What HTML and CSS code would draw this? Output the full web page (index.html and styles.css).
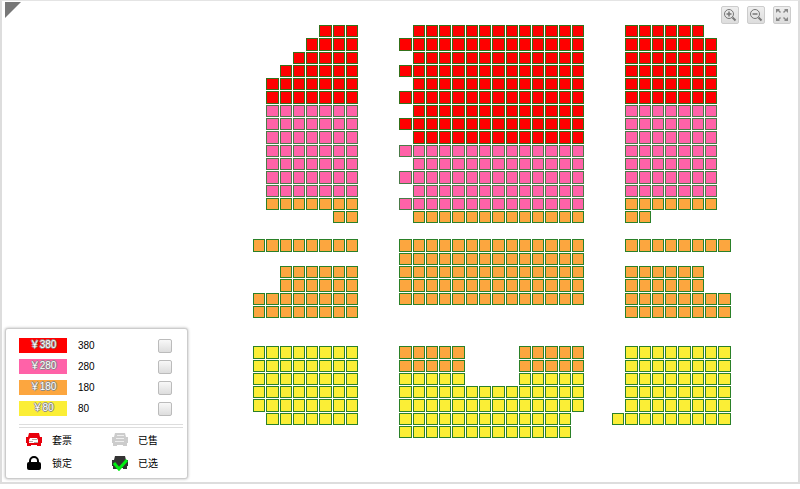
FILE: index.html
```html
<!DOCTYPE html>
<html lang="zh-CN">
<head>
    <meta charset="UTF-8">
    <meta name="viewport" content="width=device-width, initial-scale=1.0">
    <title>选座</title>
    <link rel="stylesheet" href="styles.css">
</head>
<body>
    <main class="panel">
        <div class="side">
            <svg class="corner" width="16" height="16" viewBox="0 0 16 16" aria-hidden="true">
                <path d="M0 0h16L0 16z" fill="#777"/>
            </svg>

            <!-- Price filter and seat legend -->
            <section class="legend">
                <ul class="prices">
                    <li><span class="tag red">￥380</span><label for="p380">380</label><input type="checkbox" id="p380"></li>
                    <li><span class="tag pink">￥280</span><label for="p280">280</label><input type="checkbox" id="p280"></li>
                    <li><span class="tag orange">￥180</span><label for="p180">180</label><input type="checkbox" id="p180"></li>
                    <li><span class="tag yellow">￥80</span><label for="p80">80</label><input type="checkbox" id="p80"></li>
                </ul>
                <ul class="states">
                    <li>
                        <svg width="18" height="16" viewBox="0 0 18 16" aria-hidden="true">
                            <path d="M4 1h10l1 4h2v6h-1v3h-4v-1H6v1H2v-3H1V5h2z" fill="#e8000c"/>
                            <path d="M5 6h7l1 2v3H4V8z" fill="#fff"/>
                            <path d="M4 9.5h4M7 7.5h5M9 10.5h4" stroke="#b9a9a0"/>
                        </svg>
                        <span>套票</span>
                    </li>
                    <li>
                        <svg width="18" height="16" viewBox="0 0 18 16" aria-hidden="true">
                            <path d="M4 1h10l1 4h2v6h-1v3h-4v-1H6v1H2v-3H1V5h2z" fill="#ccc"/>
                            <path d="M6 3.5h7M5 6.5h8M4 9.5h9" stroke="#eee"/>
                        </svg>
                        <span>已售</span>
                    </li>
                    <li>
                        <svg width="18" height="16" viewBox="0 0 18 16" aria-hidden="true">
                            <path d="M5 8V6a4 4 0 0 1 8 0v2" fill="none" stroke="#000" stroke-width="2"/>
                            <rect x="2" y="7" width="14" height="8" rx="2" fill="#000"/>
                        </svg>
                        <span>锁定</span>
                    </li>
                    <li>
                        <svg width="18" height="16" viewBox="0 0 18 16" aria-hidden="true">
                            <path d="M4 1h10l1 4h2v6h-1v3h-4v-1H6v1H2v-3H1V5h2z" fill="#333"/>
                            <path d="M3 8l5 6 8-9" fill="none" stroke="#0e1" stroke-width="3"/>
                        </svg>
                        <span>已选</span>
                    </li>
                </ul>
            </section>
        </div>

        <div class="hall" id="hall"></div>

        <!-- Zoom controls -->
        <div class="tools">
            <button type="button" aria-label="放大">
                <svg width="14" height="14" viewBox="0 0 14 14" fill="none" stroke="#777" aria-hidden="true">
                    <circle cx="6" cy="6" r="4.5"/><path d="M6 3.5v5M3.5 6h5" stroke-width="1.5"/><path d="M9.5 9.5l3 3" stroke-width="2"/>
                </svg>
            </button>
            <button type="button" aria-label="缩小">
                <svg width="14" height="14" viewBox="0 0 14 14" fill="none" stroke="#777" aria-hidden="true">
                    <circle cx="6" cy="6" r="4.5"/><path d="M3.5 6h5" stroke-width="1.5"/><path d="M9.5 9.5l3 3" stroke-width="2"/>
                </svg>
            </button>
            <button type="button" aria-label="全屏">
                <svg width="14" height="14" viewBox="0 0 14 14" aria-hidden="true">
                    <path d="M1 1h4L4 2l2 2-1 1-2-2-2 2zM13 1v4l-2-2-2 2-1-1 2-2-1-1zM13 13H9l1-1-2-2 1-1 2 2 2-2zM1 13V9l2 2 2-2 1 1-2 2 1 1z" fill="#888"/>
                </svg>
            </button>
        </div>
    </main>

    <script src="seats.js"></script>
</body>
</html>
```
FILE: styles.css
```css
* {
    margin: 0;
    padding: 0;
    box-sizing: border-box;
}

body {
    font-family: "Liberation Sans", "Noto Sans CJK SC", sans-serif;
    font-size: 10px;
    color: #000;
    background-color: #fff;
}

.panel {
    position: relative;
    display: grid;
    grid-template-columns: 251px 60%;
    min-height: calc(100vh - 6px);
    border: 2px solid #ddd;
    border-top: 1px solid #e4e4e4;
}

.side {
    display: flex;
    flex-direction: column;
    justify-content: space-between;
    align-items: flex-start;
    padding: 1px 3px 3px;
}

.corner {
    display: block;
}

/* Legend box */
.legend {
    width: 183px;
    padding: 6px 4px 4px 13px;
    background-color: #fff;
    border: 1px solid #ccc;
    border-radius: 3px;
    box-shadow: 0 0 3px rgba(0, 0, 0, 0.3);
}

.legend ul {
    list-style: none;
}

.prices {
    padding-bottom: 5px;
    border-bottom: 1px solid #ddd;
}

.prices li {
    display: flex;
    align-items: center;
    height: 21px;
}

.prices label {
    flex: 1;
    padding-left: 11px;
}

.prices input {
    appearance: none;
    width: 14px;
    height: 14px;
    margin-right: 11px;
    border: 1px solid #bbb;
    border-radius: 2px;
    background: linear-gradient(#f8f8f8, #ddd);
}

.prices input:checked {
    background: #0e1;
}

.tag {
    width: 48px;
    height: 15px;
    line-height: 13px;
    text-align: center;
    color: #fff;
    text-shadow: 1px 0 #888, -1px 0 #888, 0 1px #888, 0 -1px #888;
}

.states {
    display: grid;
    grid-template-columns: 86px 1fr;
    border-top: 1px solid #ddd;
    margin-top: 2px;
}

.states li {
    display: flex;
    align-items: center;
    gap: 9px;
    height: 23px;
    padding-left: 6px;
}

/* Seat colors */
.red {
    background-color: #f00;
}

.pink {
    background-color: #ff62a8;
}

.orange {
    background-color: #fca63f;
}

.yellow {
    background-color: #fbee36;
}

/* Seat map */
.hall {
    display: flex;
    flex-direction: column;
    padding: 24px 0 44px;
}

.tier {
    display: grid;
    grid-template-columns: repeat(36, 1fr);
    gap: 1px;
}

.tier:nth-child(2) {
    margin-top: 16px;
}

.tier:nth-child(3) {
    margin-top: 28px;
}

.seat {
    aspect-ratio: 1;
    border: 1px solid #2a8028;
    cursor: pointer;
}

.seat.red {
    border-color: #34701a;
}

.seat.pink {
    border-color: #4a7a48;
}

/* Zoom controls */
.tools {
    position: absolute;
    top: 5px;
    right: 7px;
    display: flex;
    gap: 8px;
}

.tools button {
    display: flex;
    align-items: center;
    justify-content: center;
    width: 18px;
    height: 18px;
    border: 1px solid #ccc;
    border-radius: 2px;
    background: linear-gradient(#eee, #ddd);
}
```
FILE: seats.js
```js
// r = 380, p = 280, o = 180, y = 80, "." = no seat
const tiers = [
    [
        ".....rrr....rrrrrrrrrrrrr...rrrrrr..",
        "....rrrr...rrrrrrrrrrrrrr...rrrrrrr.",
        "...rrrrr....rrrrrrrrrrrrr...rrrrrrr.",
        "..rrrrrr...rrrrrrrrrrrrrr...rrrrrrr.",
        ".rrrrrrr....rrrrrrrrrrrrr...rrrrrrr.",
        ".rrrrrrr...rrrrrrrrrrrrrr...rrrrrrr.",
        ".ppppppp....rrrrrrrrrrrrr...ppppppp.",
        ".ppppppp...rrrrrrrrrrrrrr...ppppppp.",
        ".ppppppp....rrrrrrrrrrrrr...ppppppp.",
        ".ppppppp...pppppppppppppp...ppppppp.",
        ".ppppppp....ppppppppppppp...ppppppp.",
        ".ppppppp...pppppppppppppp...ppppppp.",
        ".ppppppp....ppppppppppppp...ppppppp.",
        ".ooooooo...pppppppppppppp...ooooooo.",
        "......oo....ooooooooooooo...oo......"
    ],
    [
        "oooooooo...oooooooooooooo...oooooooo",
        "...........oooooooooooooo...........",
        "..oooooo...oooooooooooooo...oooooo..",
        "..oooooo...oooooooooooooo...oooooo..",
        "oooooooo...oooooooooooooo...oooooooo",
        "oooooooo....................oooooooo"
    ],
    [
        "yyyyyyyy...ooooo....ooooo...yyyyyyyy",
        "yyyyyyyy...ooooo....ooooo...yyyyyyyy",
        "yyyyyyyy...yyyyy....yyyyy...yyyyyyyy",
        "yyyyyyyy...yyyyyyyyyyyyyy...yyyyyyyy",
        "yyyyyyyy...yyyyyyyyyyyyyy...yyyyyyyy",
        ".yyyyyyy...yyyyyyyyyyyyy...yyyyyyyyy",
        "...........yyyyyyyyyyyyy............"
    ]
];

const kinds = {
    r: ["red", 380],
    p: ["pink", 280],
    o: ["orange", 180],
    y: ["yellow", 80]
};

const hall = document.getElementById("hall");
let rowNumber = 0;

tiers.forEach(rows => {
    const tier = document.createElement("div");
    tier.className = "tier";

    rows.forEach(row => {
        rowNumber++;
        [...row].forEach((code, i) => {
            if (code === ".") {
                tier.appendChild(document.createElement("span"));
                return;
            }
            const [color, price] = kinds[code];
            const seat = document.createElement("button");
            seat.type = "button";
            seat.className = `seat ${color}`;
            seat.setAttribute("aria-label", `${rowNumber}排${i + 1}座 ￥${price}`);
            tier.appendChild(seat);
        });
    });

    hall.appendChild(tier);
});
```
